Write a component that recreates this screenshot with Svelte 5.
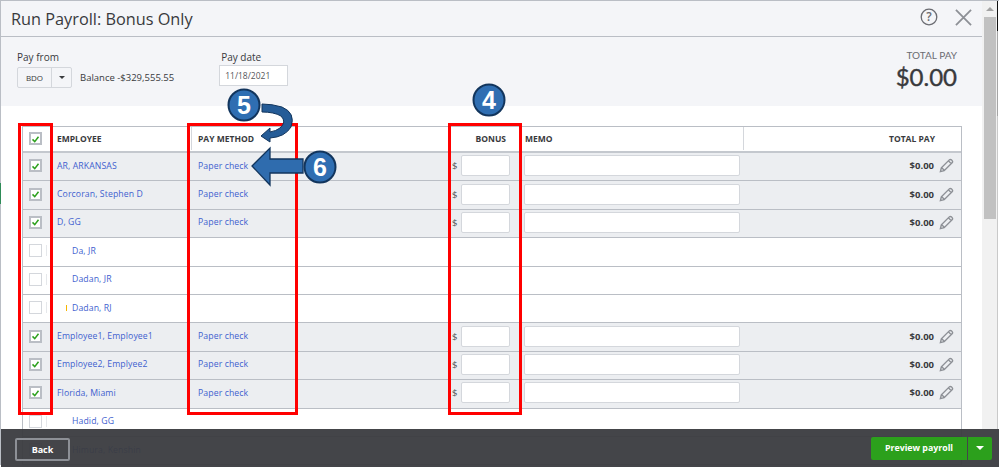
<script>
const rows = [
  { name: 'AR, ARKANSAS', paid: true },
  { name: 'Corcoran, Stephen D', paid: true },
  { name: 'D, GG', paid: true },
  { name: 'Da, JR', paid: false },
  { name: 'Dadan, JR', paid: false },
  { name: 'Dadan, RJ', paid: false, mark: true },
  { name: 'Employee1, Employee1', paid: true },
  { name: 'Employee2, Emplyee2', paid: true },
  { name: 'Florida, Miami', paid: true },
  { name: 'Hadid, GG', paid: false },
  { name: 'Himura, Kenshin', paid: false }
]
</script>

{#snippet tick()}
  <svg class="tick" viewBox="0 0 12 12"><path d="M2 6.5 L5 9.5 L10 3" fill="none" stroke="#2ca01c" stroke-width="2" /></svg>
{/snippet}

{#snippet pencil()}
  <svg class="pencil" viewBox="0 0 16 16">
    <path d="M1.5 14.5 L2.5 10.5 L11 2 Q12 1 13.2 2 L14 2.8 Q15 4 14 5 L5.5 13.5 Z M3 10.5 L5.5 13 M10 3 L13 6" fill="none" stroke="#8d9096" stroke-width="1.5" />
  </svg>
{/snippet}

<div class="page">
  <header class="titlebar">
    <h1>Run Payroll: Bonus Only</h1>
    <div class="tools">
      <svg class="help" viewBox="0 0 18 18">
        <circle cx="9" cy="9" r="7.8" fill="none" stroke="#6b6c72" stroke-width="1.3" />
        <text x="9" y="13" text-anchor="middle">?</text>
      </svg>
      <svg class="close" viewBox="0 0 18 18"><path d="M1 1 L17 17 M17 1 L1 17" stroke="#8d9096" stroke-width="1.9" /></svg>
    </div>
  </header>

  <section class="summary">
    <div class="field">
      <span class="lbl">Pay from</span>
      <div class="from">
        <div class="select"><span class="bank">BDO</span><span class="caret"></span></div>
        <span class="balance">Balance -$329,555.55</span>
      </div>
    </div>
    <div class="field date">
      <span class="lbl">Pay date</span>
      <div class="dateinput">11/18/2021</div>
    </div>
    <div class="total">
      <span>TOTAL PAY</span>
      <strong>$0.00</strong>
    </div>
  </section>

  <div class="tablewrap">
    <div class="table">
      <div class="row head">
        <div class="c check"><span class="box on">{@render tick()}</span></div>
        <div class="c emp">EMPLOYEE</div>
        <div class="c method">PAY METHOD</div>
        <div class="c bonus">BONUS</div>
        <div class="c memo">MEMO</div>
        <div class="c pay">TOTAL PAY</div>
      </div>
      {#each rows as r}
        <div class="row" class:paid={r.paid}>
          <div class="c check"><span class="box" class:on={r.paid}>{#if r.paid}{@render tick()}{/if}</span></div>
          <div class="c emp" class:indent={!r.paid}>
            {#if r.mark}<i class="mark"></i>{/if}
            <span class="link">{r.name}</span>
          </div>
          <div class="c method">{#if r.paid}<span class="link">Paper check</span>{/if}</div>
          <div class="c bonus">{#if r.paid}<span class="cur">$</span><span class="inp small"></span>{/if}</div>
          <div class="c memo">{#if r.paid}<span class="inp wide"></span>{/if}</div>
          <div class="c pay">{#if r.paid}<b>$0.00</b>{@render pencil()}{/if}</div>
        </div>
      {/each}
    </div>
  </div>

  <footer class="footer">
    <button class="back">Back</button>
    <div class="split">
      <button class="preview">Preview payroll</button>
      <button class="drop"><span></span></button>
    </div>
  </footer>

  <div class="scrollbar"><span class="arrow"></span><span class="thumb"></span></div>
  <div class="edge"></div>
  <div class="sliver"></div>

  <!-- red annotation boxes and callouts drawn over the screenshot -->
  <div class="red r1"></div>
  <div class="red r2"></div>
  <div class="red r3"></div>

  <svg class="marks" viewBox="0 0 999 467" width="999" height="467">
    <path d="M262 104 Q272 104 282 107 Q296 113 291 127 Q285 137 270 138 L270 142 L261 136 L270 128 L270 132 Q276 131 280 128 Q287 122 281 116 Q274 112 262 112 Z" fill="#255c97" stroke="#12355d" stroke-width="1" />
    <path d="M303 159 L303 173 L270 173 L270 185 L252 166 L270 148 L270 159 Z" fill="#2f6cae" stroke="#12355d" stroke-width="1.300" />
    <circle class="num" cx="244" cy="105" r="15.500" />
    <circle class="num" cx="320" cy="167" r="15.500" />
    <circle class="num" cx="489" cy="100" r="15.500" />
    <text x="244" y="114">5</text>
    <text x="320" y="176">6</text>
    <text x="489" y="109">4</text>
  </svg>
</div>

<style>
  :global(body) {
    margin: 0;
    background: #fff;
  }

  .page {
    position: relative;
    width: 999px;
    height: 467px;
    overflow: hidden;
    font-family: "Open Sans", "Liberation Sans", sans-serif;
    color: #393a3d;
    box-sizing: border-box;
    border-top: 1px solid #babec5;
  }

  .titlebar {
    height: 36px;
    width: 982px;
    box-sizing: border-box;
    padding: 0 10px 0 10px;
    background: #f4f5f8;
    border-left: 1px solid #babec5;
    border-bottom: 1px solid #babec5;
    display: flex;
    align-items: center;
    justify-content: space-between;
  }

  h1 {
    margin: 0;
    font-size: 16.300px;
    font-weight: 400;
    color: #393a3d;
  }

  .tools {
    display: flex;
    align-items: center;
    gap: 17px;
    margin-bottom: 3px;
  }

  .help { width: 18px; height: 18px; }
  .help text { font: 600 12px "Open Sans", sans-serif; fill: #6b6c72; }
  .close { width: 17px; height: 17px; }

  .summary {
    height: 69px;
    width: 982px;
    box-sizing: border-box;
    background: #f4f5f8;
    border-left: 1px solid #babec5;
    padding: 13px 25px 0 16px;
    display: flex;
  }

  .field { display: flex; flex-direction: column; gap: 1px; }
  .date { margin-left: 47px; }

  .lbl { font-size: 10px; line-height: 14px; color: #393a3d; }

  .from { display: flex; align-items: center; gap: 8px; margin-top: 2px; }

  .select {
    width: 55px;
    height: 21px;
    box-sizing: border-box;
    border: 1px solid #d4d7dc;
    background: #f4f5f8;
    border-radius: 2px;
    display: flex;
    font-size: 8px;
    color: #393a3d;
  }

  .bank {
    width: 33px;
    display: flex;
    align-items: center;
    justify-content: center;
    border-right: 1px solid #d4d7dc;
  }

  .caret {
    flex: 1;
    position: relative;
  }

  .caret::after {
    content: "";
    position: absolute;
    left: 7px;
    top: 8px;
    border: 3px solid transparent;
    border-top: 3px solid #393a3d;
  }

  .balance { font-size: 9.500px; color: #393a3d; }

  .dateinput {
    width: 69px;
    height: 21px;
    box-sizing: border-box;
    background: #fff;
    border: 1px solid #d4d7dc;
    padding-left: 5px;
    font-size: 8.500px;
    line-height: 19px;
    color: #55565a;
    margin-left: -2px;
  }

  .total {
    margin-left: auto;
    margin-top: -1px;
    display: flex;
    flex-direction: column;
    align-items: flex-end;
    font-family: Lato, "Liberation Sans", sans-serif;
  }

  .total span { font-size: 10px; line-height: 13px; color: #6b6c72; }
  .total strong { font-size: 24px; line-height: 29px; font-weight: 400; color: #393a3d; -webkit-text-stroke: 0.4px #393a3d; }

  .tablewrap {
    width: 982px;
    box-sizing: border-box;
    padding: 20px 0 0 22px;
    border-left: 1px solid #babec5;
  }

  .table {
    width: 940px;
    border: 1px solid #babec5;
    border-bottom: 0;
    box-sizing: border-box;
    margin-left: -1px;
  }

  .row {
    display: grid;
    grid-template-columns: 32px 136px 255px 78px 219px 218px;
    height: 28.400px;
    padding-bottom: 2px;
    box-sizing: border-box;
    border-bottom: 1px solid #babec5;
    font-size: 8.700px;
    align-items: center;
  }

  .row.paid { background: #eceef1; }

  .row.head {
    height: 26px;
    padding-bottom: 1px;
    border-bottom: 2px solid #c4c8ce;
    font-size: 8.500px;
    font-weight: 700;
    color: #393a3d;
  }

  .c {
    min-width: 0;
    white-space: nowrap;
    height: 100%;
    display: flex;
    align-items: center;
  }

  .check { padding-left: 6px; }

  .emp { padding-left: 2px; }
  .emp.indent { padding-left: 17px; position: relative; }
  .head .emp { padding-left: 2px; }

  .mark {
    position: absolute;
    left: 11px;
    top: 10px;
    width: 1px;
    height: 6px;
    background: #f7b500;
  }

  .method { padding-left: 7px; }

  .head .method, .head .pay { border-left: 1px solid #d4d7dc; }
  .head .method { padding-left: 6px; }

  .head .bonus { justify-content: flex-end; padding-right: 18px; }
  .bonus { padding-left: 6px; }

  .memo { padding-left: 0; }
  .head .memo { padding-left: 1px; }

  .pay { justify-content: flex-end; padding-right: 7px; gap: 5px; }
  .head .pay { padding-right: 26px; }

  .pay b { font-size: 9.500px; font-weight: 700; color: #393a3d; }

  .link { color: #3f5fcf; letter-spacing: 0.1px; }

  .cur { color: #55565a; width: 9px; font-size: 9.500px; }

  .inp {
    display: block;
    height: 21px;
    box-sizing: border-box;
    background: #fff;
    border: 1px solid #d4d7dc;
    border-radius: 2px;
  }

  .inp.small { width: 49px; }
  .inp.wide { width: 216px; }

  .box {
    position: relative;
    width: 13px;
    height: 13px;
    box-sizing: border-box;
    border: 1px solid #d4d7dc;
    background: #fff;
    display: flex;
    align-items: center;
    justify-content: center;
  }

  .box:not(.on)::after {
    content: "";
    position: absolute;
    left: 16px;
    top: 0;
    width: 1px;
    height: 11px;
    background: #e6e8eb;
  }

  .box.on { border: 2px solid #babec5; background: #fff; }

  .tick { width: 10px; height: 10px; }
  .pencil { width: 15px; height: 15px; }

  .footer {
    position: absolute;
    left: 1px;
    right: 0;
    top: 428px;
    height: 38px;
    box-sizing: border-box;
    padding: 0 7px 0 14px;
    background: rgba(58, 59, 63, 0.95);
    display: flex;
    align-items: center;
    justify-content: space-between;
  }

  button {
    font-family: inherit;
    cursor: pointer;
  }

  .back {
    width: 55px;
    height: 23px;
    margin-top: 2px;
    background: transparent;
    border: 2px solid #8d9096;
    border-radius: 2px;
    color: #fff;
    font-size: 9px;
    font-weight: 700;
    padding: 0;
  }

  .split { display: flex; gap: 1px; }

  .preview, .drop {
    background: #2ca01c;
    border: 0;
    color: #fff;
    height: 23px;
    padding: 0;
  }

  .preview {
    width: 96px;
    font-size: 8.800px;
    font-weight: 700;
    border-radius: 2px 0 0 2px;
  }

  .drop {
    width: 24px;
    border-radius: 0 2px 2px 0;
    position: relative;
  }

  .drop span {
    position: absolute;
    left: 8px;
    top: 9px;
    border: 4px solid transparent;
    border-top: 4px solid #fff;
  }

  .scrollbar {
    position: absolute;
    left: 982px;
    top: 0;
    width: 15px;
    height: 428px;
    background: #f1f1f1;
  }

  .arrow {
    position: absolute;
    left: 4px;
    top: 6px;
    border: 4px solid transparent;
    border-bottom: 4px solid #a3a3a3;
    border-top: 0;
  }

  .thumb {
    position: absolute;
    left: 2px;
    width: 12px;
    top: 16px;
    height: 202px;
    background: #c1c1c1;
  }

  .edge {
    position: absolute;
    left: 997px;
    top: 0;
    width: 1px;
    height: 428px;
    background: linear-gradient(#111 0 30px, #a5a5a5 30px 115px, #c9c9c9 115px);
  }

  .sliver {
    position: absolute;
    left: 0;
    top: 182px;
    width: 1px;
    height: 21px;
    background: #2e8b57;
  }

  .red {
    position: absolute;
    border: 3px solid #f00;
    box-sizing: border-box;
  }

  .r1 { left: 18px; top: 122px; width: 35px; height: 292px; }
  .r2 { left: 187px; top: 122px; width: 111px; height: 292px; }
  .r3 { left: 448px; top: 122px; width: 74px; height: 292px; }

  .marks {
    position: absolute;
    left: 0;
    top: -1px;
    pointer-events: none;
  }

  .num {
    fill: #2f6eb2;
    stroke: #12355d;
    stroke-width: 2;
  }

  .marks text {
    fill: #fff;
    font: 700 25px "Liberation Sans", sans-serif;
    text-anchor: middle;
  }
</style>
